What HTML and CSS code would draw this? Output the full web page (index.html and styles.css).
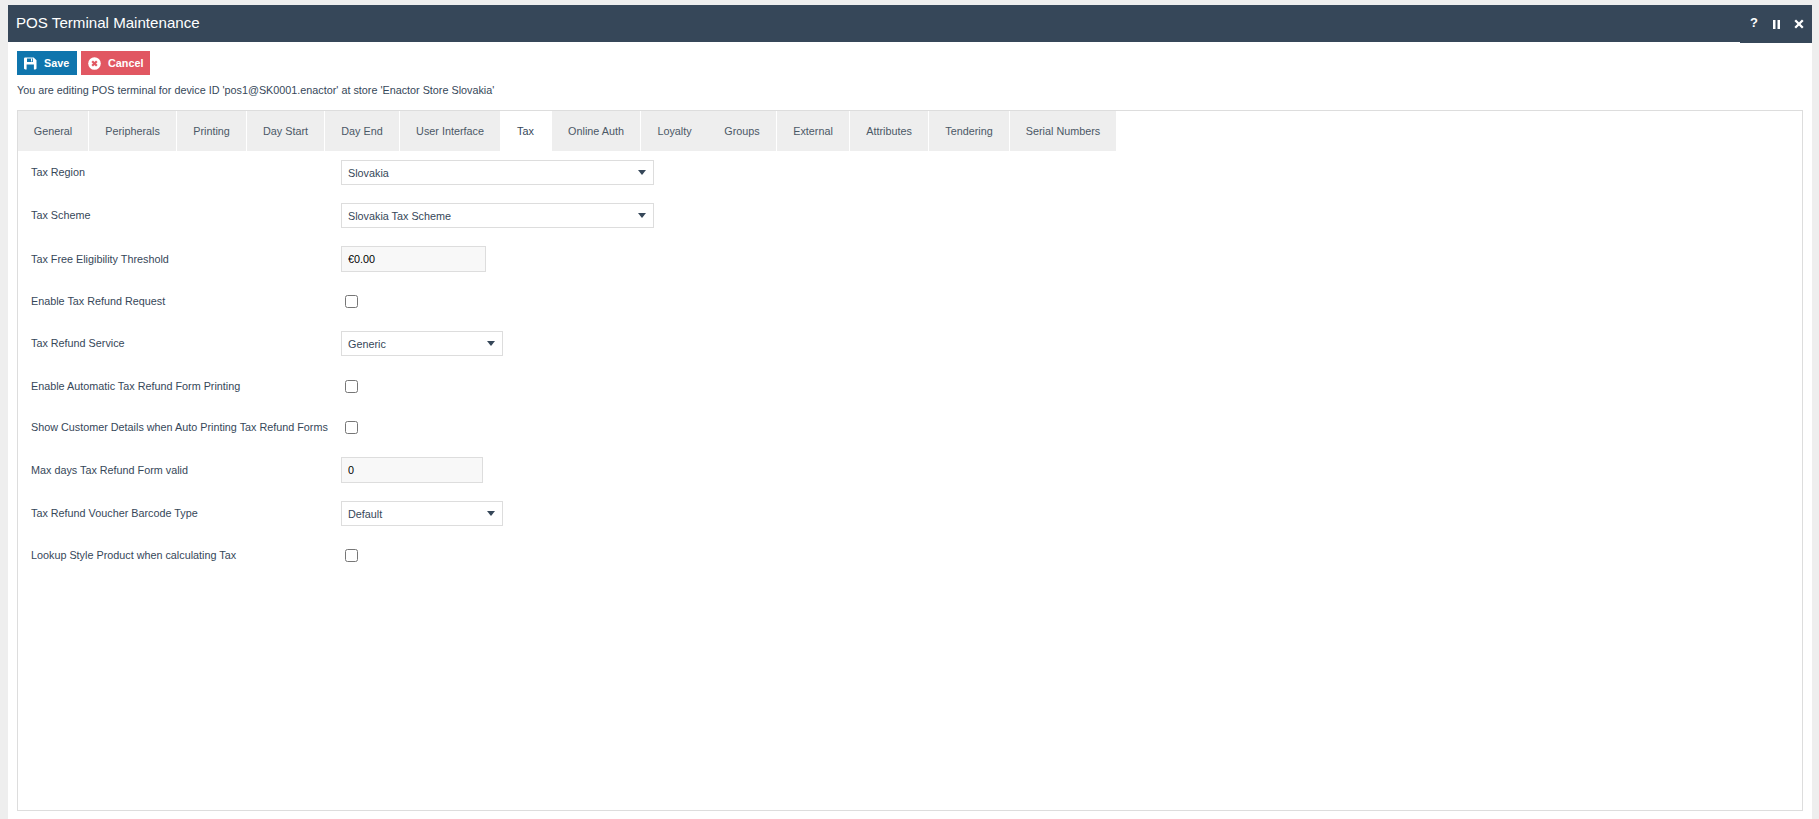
FILE: index.html
```html
<!DOCTYPE html>
<html lang="en">
<head>
<meta charset="utf-8">
<title>POS Terminal Maintenance</title>
<link rel="stylesheet" href="styles.css">
</head>
<body>
<div class="window">
  <header class="titlebar">
    <h1 class="title">POS Terminal Maintenance</h1>
    <div class="win-actions">
      <span class="win-help">?</span>
      <svg class="win-icon pause" width="7" height="9" viewBox="0 0 7 9"><path d="M0 0h2.500v9H0zM4.500 0H7v9H4.500z" fill="#fff"/></svg>
      <svg class="win-icon" width="10" height="10" viewBox="0 0 10 10"><path d="M1.200 1.200l7.600 7.600M8.800 1.200L1.200 8.800" stroke="#fff" stroke-width="2.300" fill="none"/></svg>
    </div>
  </header>
  <div class="content">
    <div class="toolbar">
      <button class="btn btn-save" type="button">
        <svg width="13" height="13" viewBox="0 0 13 13"><path fill-rule="evenodd" d="M1.300 0.500h8.400L12.500 3.300v8c0 .7-.5 1.200-1.200 1.200h-10C.6 12.500 0 12 0 11.300v-9.600C0 1 .6.500 1.300.500zM3 1.500v3.500h6V1.500zM7 1.800h1.200v2.700H7zM2.600 7.500v5h7.300v-5z" fill="#fff"/></svg>
        Save
      </button>
      <button class="btn btn-cancel" type="button">
        <svg width="13" height="13" viewBox="0 0 13 13"><circle cx="6.500" cy="6.500" r="6.300" fill="#fff"/><path d="M4.200 4.200l4.600 4.600M8.800 4.200l-4.600 4.600" stroke="#e15762" stroke-width="2.200"/></svg>
        Cancel
      </button>
    </div>
    <p class="notice">You are editing POS terminal for device ID 'pos1@SK0001.enactor' at store 'Enactor Store Slovakia'</p>
    <section class="panel">
      <nav class="tabs">
        <a class="tab w71">General</a>
        <a class="tab w88">Peripherals</a>
        <a class="tab w70">Printing</a>
        <a class="tab w78">Day Start</a>
        <a class="tab w75">Day End</a>
        <a class="tab w100 flat">User Interface</a>
        <a class="tab active w52">Tax</a>
        <a class="tab w89">Online Auth</a>
        <a class="tab flat w67">Loyalty</a>
        <a class="tab w69">Groups</a>
        <a class="tab w73">External</a>
        <a class="tab w79">Attributes</a>
        <a class="tab w81">Tendering</a>
        <a class="tab flat w106">Serial Numbers</a>
      </nav>
      <div class="form">
        <div class="row"><label class="lbl">Tax Region</label><div class="select wide">Slovakia<i class="caret"></i></div></div>
        <div class="row"><label class="lbl">Tax Scheme</label><div class="select wide">Slovakia Tax Scheme<i class="caret"></i></div></div>
        <div class="row"><label class="lbl">Tax Free Eligibility Threshold</label><input class="num w145" type="text" value="€0.00"></div>
        <div class="row cb"><label class="lbl">Enable Tax Refund Request</label><input class="check" type="checkbox"></div>
        <div class="row"><label class="lbl">Tax Refund Service</label><div class="select narrow">Generic<i class="caret"></i></div></div>
        <div class="row cb tall"><label class="lbl">Enable Automatic Tax Refund Form Printing</label><input class="check" type="checkbox"></div>
        <div class="row cb"><label class="lbl">Show Customer Details when Auto Printing Tax Refund Forms</label><input class="check" type="checkbox"></div>
        <div class="row"><label class="lbl">Max days Tax Refund Form valid</label><input class="num w142" type="text" value="0"></div>
        <div class="row"><label class="lbl">Tax Refund Voucher Barcode Type</label><div class="select narrow">Default<i class="caret"></i></div></div>
        <div class="row cb"><label class="lbl">Lookup Style Product when calculating Tax</label><input class="check" type="checkbox"></div>
      </div>
    </section>
  </div>
</div>
</body>
</html>
```
FILE: styles.css
```css
* { box-sizing: border-box; }
html, body { height: 100%; }
body {
  margin: 0;
  padding: 5px 7px 0 8px;
  background: #eeeeee;
  font-family: "Liberation Sans", Arial, sans-serif;
  font-size: 10.8px;
  color: #364759;
  overflow: hidden;
}
.window { background: #fff; height: 814px; display: flex; flex-direction: column; }
.titlebar {
  position: relative;
  height: 37px;
  background: #364759;
  display: flex;
  align-items: center;
  justify-content: space-between;
  padding: 0 8px 0 8px;
  color: #fff;
  flex: none;
}
.titlebar::after {
  content: "";
  position: absolute;
  right: 0;
  bottom: -1px;
  width: 72px;
  height: 1px;
  background: #364759;
}
.title { margin: -2px 0 0; font-size: 15.12px; font-weight: 400; }
.win-actions { display: flex; align-items: center; gap: 16px; }
.win-help { font-size: 13px; font-weight: 700; width: 7px; margin-top: -2px; }
.win-icon { display: block; }
.pause { margin-top: 1px; margin-right: -2px; }
.content { padding: 9px 9px 0 9px; flex: 1; display: flex; flex-direction: column; min-height: 0; }
.toolbar { display: flex; gap: 4px; }
.btn {
  height: 24px;
  border: 0;
  padding: 0 0 0 7px;
  display: flex;
  align-items: center;
  gap: 7px;
  color: #fff;
  font: 700 10.8px "Liberation Sans", Arial, sans-serif;
}
.btn-save { background: #0f75ad; width: 60px; }
.btn-cancel { background: #e15762; width: 69px; }
.notice { margin: 9px 0 0; line-height: 13px; font-size: 10.8px; height: 26px; }
.panel { border: 1px solid #dddddd; height: 701px; }
.tabs { display: flex; height: 40px; }
.tab {
  display: flex;
  align-items: center;
  justify-content: center;
  background: #eeeeee;
  border-right: 1px solid #fff;
  color: #4b5866;
  font-size: 10.8px;
}
.tab.flat { border-right: 0; }
.tab.active { background: #fff; color: #364759; }
.w52 { width: 52px; } .w67 { width: 67px; } .w69 { width: 69px; } .w70 { width: 70px; } .w71 { width: 71px; }
.w73 { width: 73px; } .w75 { width: 75px; } .w78 { width: 78px; } .w79 { width: 79px; } .w81 { width: 81px; }
.w88 { width: 88px; } .w89 { width: 89px; } .w100 { width: 100px; } .w106 { width: 106px; }
.form { padding: 9px 13px 0 13px; }
.row { display: flex; align-items: center; min-height: 25px; margin-bottom: 18px; }
.row.cb { min-height: 23px; }
.row.cb.tall { min-height: 24px; }
.lbl { width: 310px; flex: none; white-space: nowrap; margin-top: -1px; }
.select {
  height: 25px;
  border: 1px solid #dddddd;
  background: #fff;
  display: flex;
  align-items: center;
  justify-content: space-between;
  padding: 0 7px 0 6px;
  color: #364759;
}
.select.wide { width: 313px; }
.select.narrow { width: 162px; }
.caret { width: 0; height: 0; border: 4.500px solid transparent; border-top: 5.500px solid #364759; border-bottom: 0; }
.num {
  height: 26px;
  border: 1px solid #dddddd;
  background: #f8f8f8;
  padding: 0 6px;
  font: 10.8px "Liberation Sans", Arial, sans-serif;
  color: #000;
}
.w145 { width: 145px; }
.w142 { width: 142px; }
.check { margin: 0 0 0 4px; width: 13px; height: 13px; }
```
